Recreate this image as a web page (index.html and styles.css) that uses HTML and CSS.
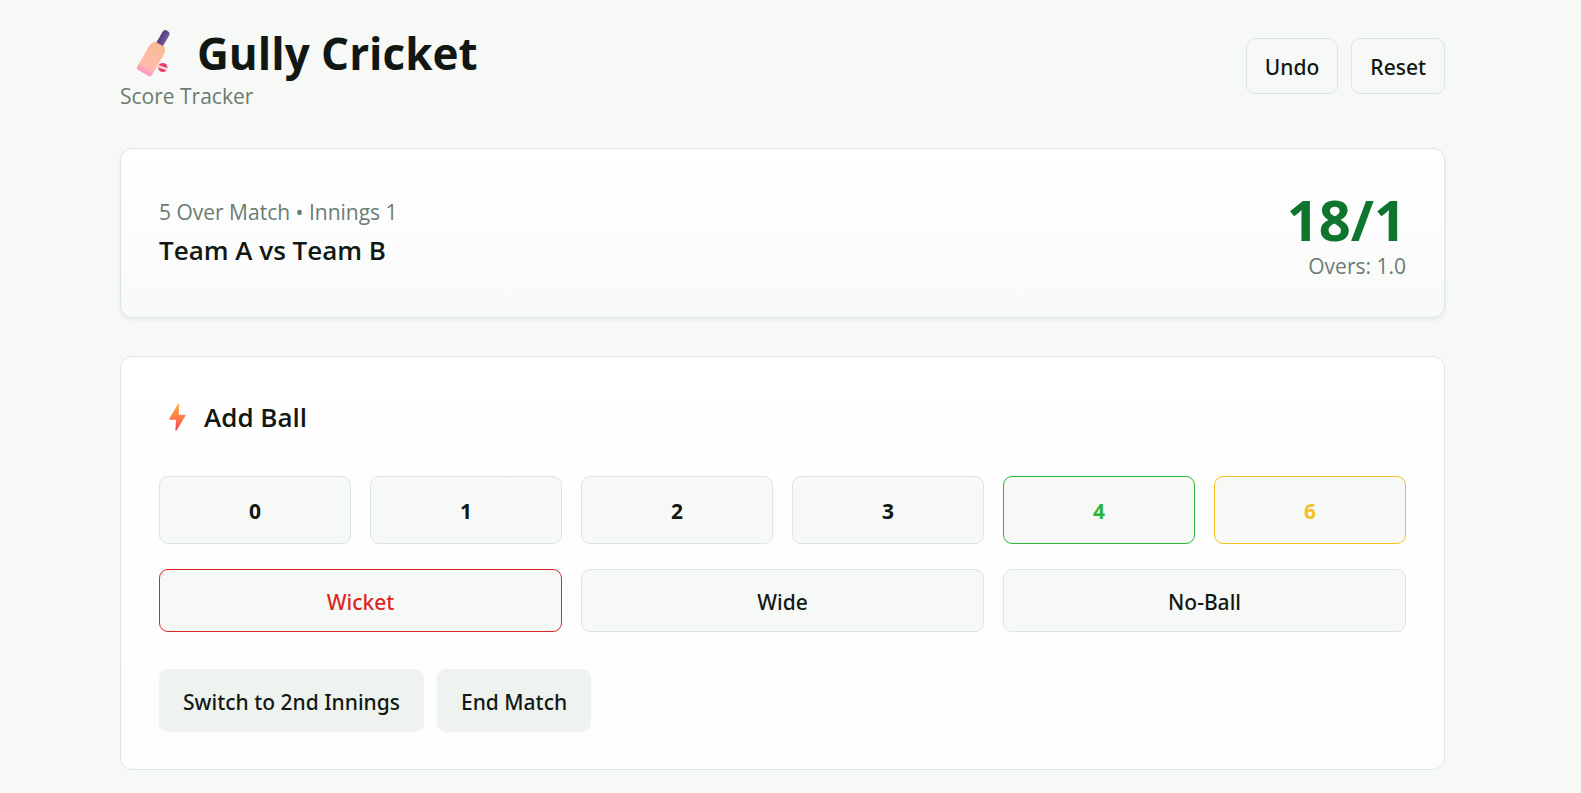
FILE: index.html
```html
<!DOCTYPE html>
<html lang="en">
<head>
<meta charset="utf-8">
<title>Gully Cricket</title>
<link rel="stylesheet" href="styles.css">
</head>
<body>
<div class="page">
  <header class="header">
    <div>
      <h1 class="title">
        <svg class="bat" viewBox="0 0 62 56" aria-hidden="true">
          <defs>
            <linearGradient id="blade" x1="0" y1="0" x2="0" y2="1">
              <stop offset="0" stop-color="#f9b98f"/><stop offset=".75" stop-color="#ffbcaa"/><stop offset="1" stop-color="#ff94c4"/>
            </linearGradient>
            <linearGradient id="grip" x1="0" y1="0" x2="1" y2="0">
              <stop offset="0" stop-color="#533a7c"/><stop offset="1" stop-color="#785a9f"/>
            </linearGradient>
          </defs>
          <g transform="translate(1.500 1.500) rotate(30 32 28)">
            <rect x="28.500" y="0.500" width="7.500" height="20" rx="3.500" fill="url(#grip)"/>
            <path d="M28 16h9q1.500 0 2.500 2l1 2.500q.5 1 .5 3v23q0 2.500-2.500 2.500h-12q-2.500 0-2.500-2.500v-23q0-2 .5-3l1-2.500q1-2 2.500-2z" fill="url(#blade)"/>
          </g>
          <circle cx="42.800" cy="42.500" r="4.600" fill="#ee3d63"/>
          <path d="M38.500 40.200l8.800 2.800-.7 2.300-8-2.700z" fill="#ffe2f2"/>
        </svg>
        Gully Cricket
      </h1>
      <p class="muted">Score Tracker</p>
    </div>
    <div class="actions">
      <button type="button" class="btn btn-small">Undo</button>
      <button type="button" class="btn btn-small">Reset</button>
    </div>
  </header>

  <main>
    <section class="card scoreboard">
      <div class="match">
        <p class="muted">5 Over Match • Innings 1</p>
        <h2 class="teams">Team A vs Team B</h2>
      </div>
      <div class="score">
        <p class="runs">18/1</p>
        <p class="muted">Overs: 1.0</p>
      </div>
    </section>

    <section class="card controls">
      <h2 class="subtitle">
        <svg class="bolt" viewBox="0 0 38 36" aria-hidden="true">
          <defs>
            <linearGradient id="flash" x1="0" y1="0" x2="0" y2="1">
              <stop offset="0" stop-color="#fdb545"/><stop offset="1" stop-color="#f8434c"/>
            </linearGradient>
          </defs>
          <path d="M18.800 5.200q1.200-1.400 1.300.3l-.3 10.200h6q1.200.2.500 1.300l-8.600 14.300q-1.200 1.500-1.300-.2l.6-10.400h-6q-1.200-.2-.6-1.300z" fill="url(#flash)"/>
        </svg>
        Add Ball
      </h2>
      <div class="runs-grid">
        <button type="button" class="btn run">0</button>
        <button type="button" class="btn run">1</button>
        <button type="button" class="btn run">2</button>
        <button type="button" class="btn run">3</button>
        <button type="button" class="btn run four">4</button>
        <button type="button" class="btn run six">6</button>
      </div>
      <div class="extras-grid">
        <button type="button" class="btn wicket">Wicket</button>
        <button type="button" class="btn">Wide</button>
        <button type="button" class="btn">No-Ball</button>
      </div>
      <div class="match-actions">
        <button type="button" class="btn secondary">Switch to 2nd Innings</button>
        <button type="button" class="btn secondary">End Match</button>
      </div>
    </section>
  </main>
</div>
</body>
</html>
```
FILE: styles.css
```css
* { box-sizing: border-box; }

body {
  margin: 0;
  background: #f7f9f7;
  color: #111814;
  font-family: "Segoe UI", "Open Sans", "Noto Sans", sans-serif;
  font-size: 21px;
  line-height: 30px;
}

h1, h2, p { margin: 0; }

.page { padding: 25px 136px 23px 120px; }

.header {
  display: flex;
  justify-content: space-between;
  align-items: flex-start;
  margin-bottom: 37px;
}

.title {
  display: flex;
  align-items: center;
  gap: 15px;
  font-size: 44px;
  line-height: 56px;
  font-weight: 700;
}

.bat { width: 62px; height: 56px; }

.muted { color: #6b7c72; }

.actions { display: flex; gap: 13px; padding-top: 13px; }

.btn {
  min-height: 63px;
  padding: 2px 23px 0;
  border: 1px solid #dce6de;
  border-radius: 9px;
  background: #f7f9f7;
  color: #111814;
  font-family: "Segoe UI", "Noto Sans", "Open Sans", sans-serif;
  font-size: 21px;
  line-height: 30px;
  font-weight: 500;
}

.btn-small { min-height: 56px; padding: 2px 18px 0; }

.card {
  border: 1px solid #dce6de;
  border-radius: 12px;
  padding: 38px 38px 37px;
}

.scoreboard {
  display: flex;
  justify-content: space-between;
  padding-bottom: 36px;
  margin-bottom: 38px;
  background: linear-gradient(#ffffff, #f8faf8);
  box-shadow: 0 2px 4px rgba(17, 24, 20, 0.06);
}

.match { padding-top: 10px; }

.teams { font-size: 26px; line-height: 46px; font-weight: 600; }

.score { text-align: right; }

.runs {
  color: #0e752f;
  font-size: 56px;
  line-height: 64px;
  font-weight: 700;
}

.controls { background: linear-gradient(#ffffff, #fcfdfc); }

.subtitle {
  display: flex;
  align-items: center;
  gap: 7px;
  margin-bottom: 37px;
  font-size: 26px;
  line-height: 44px;
  font-weight: 600;
}

.bolt { width: 38px; height: 36px; }

.runs-grid, .extras-grid {
  display: grid;
  grid-template-columns: repeat(6, 1fr);
  gap: 19px;
  margin-bottom: 25px;
}

.extras-grid { grid-template-columns: repeat(3, 1fr); margin-bottom: 37px; }

.run { min-height: 68px; font-weight: 700; }

.four { border-color: #2eb53a; color: #2eb53a; }
.six { border-color: #f6bf26; color: #f6bf26; }
.wicket { border-color: #dc2626; color: #dc2626; }

.match-actions { display: flex; gap: 13px; }

.secondary { border-color: #eff3f0; background: #eff3f0; }
```
